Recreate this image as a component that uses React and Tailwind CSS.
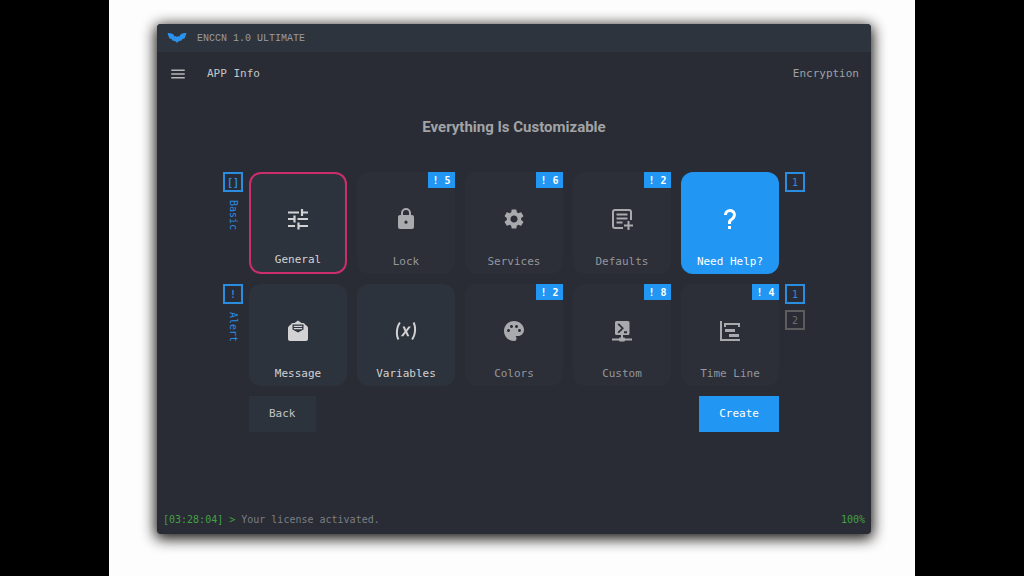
/* src/App.jsx */
import React, { useState } from "react";
import { MdMenu, MdPalette, MdSettings } from "react-icons/md";

const Svg = ({ children, className, ...rest }) => (
  <svg viewBox="0 0 24 24" fill="currentColor" className={className} aria-hidden="true" {...rest}>
    {children}
  </svg>
);

const TuneIcon = (props) => (
  <Svg {...props}>
    <path
      d="M2 5.500h11M16 2v7M16 5.500h6M2 12h6M8.500 8.500v7M11.500 12H22M2 19h7M12.500 15.500v7M12.500 19H22"
      fill="none"
      stroke="currentColor"
      strokeWidth="2.2"
    />
  </Svg>
);

const LockIcon = (props) => (
  <Svg {...props}>
    <path d="M12,16.800A1.600,1.600 0 0,0 13.600,15.200A1.600,1.600 0 0,0 12,13.600A1.600,1.600 0 0,0 10.400,15.200A1.600,1.600 0 0,0 12,16.800M18,8A2,2 0 0,1 20,10V20A2,2 0 0,1 18,22H6A2,2 0 0,1 4,20V10C4,8.89 4.9,8 6,8H7V6A5,5 0 0,1 12,1A5,5 0 0,1 17,6V8H18M12,3A3,3 0 0,0 9,6V8H15V6A3,3 0 0,0 12,3Z" />
  </Svg>
);

const NoteAddIcon = (props) => (
  <Svg {...props}>
    <path
      d="M21 13V5a2 2 0 0 0-2-2H5a2 2 0 0 0-2 2v14a2 2 0 0 0 2 2h8M6.5 7.5h11M6.5 11.5h11M6.5 15.5h6M18.5 14v9M14 18.5h9"
      fill="none"
      stroke="currentColor"
      strokeWidth="2"
    />
  </Svg>
);

const HelpIcon = (props) => (
  <Svg {...props}>
    <path d="M10,19H13V22H10V19M12,2C17.35,2.22 19.68,7.62 16.5,11.67C15.67,12.67 14.33,13.33 13.67,14.17C13,15 13,16 13,17H10C10,15.33 10,13.92 10.67,12.92C11.33,11.92 12.67,11.33 13.5,10.67C15.92,8.43 15.32,5.26 12,5A3,3 0 0,0 9,8H6A6,6 0 0,1 12,2Z" />
  </Svg>
);

const MessageIcon = (props) => (
  <Svg {...props}>
    <path
      fillRule="evenodd"
      d="M12 1.500 15.500 4H17q1.5 0 1.8 1.3L21 7q1 .8 1 2v11a2 2 0 0 1-2 2H4a2 2 0 0 1-2-2V9q0-1.200 1-2l2.200-1.700Q5.500 4 7 4h1.500ZM6.500 5.500v5L12 13.500l5.500-3v-5Z"
    />
    <path d="M7.800 6.700h8.400v1.200H7.800ZM7.800 9.100h8.400v1.100H7.800Z" />
  </Svg>
);

const VariableIcon = (props) => (
  <Svg {...props}>
    <path d="M20.41,3C21.8,5.71 22.35,8.84 22,12C21.8,15.16 20.7,18.29 18.83,21L17.3,20C18.91,17.57 19.85,14.8 20,12C20.34,9.2 19.89,6.43 18.7,4L20.41,3M5.17,3L6.7,4C5.09,6.43 4.15,9.2 4,12C3.66,14.8 4.12,17.57 5.3,20L3.61,21C2.21,18.29 1.65,15.17 2,12C2.2,8.84 3.3,5.71 5.17,3M12.08,10.68L14.4,7.45H16.93L13.15,12.45L15.35,17.37H13.09L11.71,14L9.28,17.33H6.76L10.66,12.21L8.53,7.45H10.8L12.08,10.68Z" />
  </Svg>
);

const ConsoleNetworkIcon = (props) => (
  <Svg {...props}>
    <path
      fillRule="evenodd"
      d="M6.500 2h11.500a1.500 1.500 0 0 1 1.500 1.500v11a1.500 1.500 0 0 1-1.500 1.500H13v2.500h1q1 0 1 1h7v2h-7q0 1-1 1h-4q-1 0-1-1H2v-2h7q0-1 1-1h1V16H6.500A1.500 1.500 0 0 1 5 14.500v-11A1.500 1.500 0 0 1 6.500 2ZM7.500 5.500l4 3.800-4 3.700 1.400 1.300 5-5-5-5ZM14 12.300h3v2h-3Z"
    />
  </Svg>
);

const GanttIcon = (props) => (
  <Svg {...props}>
    <path d="M2,2H4V20H22V22H2V2M7,10H17V13H7V10M11,15H21V18H11V15M6,4H22V8H20V6H8V8H6V4Z" />
  </Svg>
);

const rows = [
  {
    mark: "[]",
    label: "Basic",
    pages: [1],
    items: [
      { name: "General", icon: TuneIcon, active: true },
      { name: "Lock", icon: LockIcon, count: 5 },
      { name: "Services", icon: MdSettings, count: 6 },
      { name: "Defaults", icon: NoteAddIcon, count: 2 },
      { name: "Need Help?", icon: HelpIcon, help: true },
    ],
  },
  {
    mark: "!",
    label: "Alert",
    pages: [1, 2],
    items: [
      { name: "Message", icon: MessageIcon, active: true },
      { name: "Variables", icon: VariableIcon, active: true },
      { name: "Colors", icon: MdPalette, count: 2 },
      { name: "Custom", icon: ConsoleNetworkIcon, count: 8 },
      { name: "Time Line", icon: GanttIcon, count: 4 },
    ],
  },
];

const tileStyle = (item) => {
  if (item.help) return "bg-[#2196f3] text-white";
  if (item.active) return "bg-[#2d333c] text-[#d2d2d4]";
  return "bg-[#2c2e38] text-[#a9aaad]";
};

const Tile = ({ item, selected, onSelect }) => {
  const Icon = item.icon;
  return (
    <button
      type="button"
      onClick={onSelect}
      className={`relative flex h-[102px] flex-col items-center justify-between rounded-xl pb-1
        ${tileStyle(item)}
        ${selected ? "border-2 border-[#cb2d6d] pt-[33px]" : "pt-[35px]"}`}
    >
      <Icon className="h-6 w-6" />
      <span className={`text-[11px] leading-4 ${item.help || item.active ? "" : "text-[#95969b]"}`}>
        {item.name}
      </span>
      {item.count && (
        <span className="absolute right-0 top-0 flex h-4 w-[27px] items-center justify-center bg-[#2196f3] text-[10px] font-bold text-white">
          ! {item.count}
        </span>
      )}
    </button>
  );
};

const Row = ({ row, selected, onSelect }) => {
  const [page, setPage] = useState(1);

  return (
    <div className="flex gap-1.5">
      <div className="flex w-5 flex-col items-center gap-2 text-[10px] text-[#2a8de0]">
        <span className="flex h-5 w-5 items-center justify-center border-2 border-current font-bold">
          {row.mark}
        </span>
        <span className="leading-5 [writing-mode:vertical-rl]">{row.label}</span>
      </div>

      <div className="grid flex-1 grid-cols-5 gap-2.5">
        {row.items.map((item) => (
          <Tile
            key={item.name}
            item={item}
            selected={selected === item.name}
            onSelect={() => onSelect(item.name)}
          />
        ))}
      </div>

      <div className="flex w-5 flex-col gap-1.5">
        {row.pages.map((n) => (
          <button
            key={n}
            type="button"
            onClick={() => setPage(n)}
            className={`flex h-5 w-5 items-center justify-center border-2 text-[10px]
              ${page === n ? "border-[#2a8de0] text-[#2a8de0]" : "border-[#5c5c5e] text-[#6c6c6e]"}`}
          >
            {n}
          </button>
        ))}
      </div>
    </div>
  );
};

const App = () => {
  const [selected, setSelected] = useState("General");

  return (
    <div className="min-h-screen bg-black font-['DejaVu_Sans_Mono',monospace]">
      <div className="mx-auto flex min-h-screen w-full max-w-[806px] flex-col bg-[#fdfdfd] pb-[42px] pl-12 pr-11 pt-6">
        <div className="flex flex-1 flex-col overflow-hidden rounded-sm bg-[#292c34] shadow-[0_3px_14px_2px_rgba(15,12,8,0.95)]">
          {/* Title bar */}
          <header className="flex h-7 items-center gap-2.5 bg-[#2e343e] px-2.5">
            <svg viewBox="0 0 20 12" className="h-3 w-5 text-[#2b92ec]" fill="currentColor" aria-hidden="true">
              <path d="M.5 1C4 .800 6.600 1.600 7.600 4.400L8.800 4.100 10 5l1.200-.9 1.200.3C13.400 1.600 16 .800 19.500 1c-.6 1.800-1 3.600-2 5.400C15.500 6.600 14.800 7.400 14.200 8.800 12.600 8.600 11 9.400 10 11 9 9.400 7.400 8.600 5.800 8.800 5.200 7.400 4.500 6.600 2.500 6.400 1.500 4.600 1.100 2.800.5 1Z" />
            </svg>
            <span className="font-['Liberation_Mono',monospace] text-[10px] text-[#989ba1]">ENCCN 1.0 ULTIMATE</span>
          </header>

          {/* Menu */}
          <nav className="flex h-11 items-center px-3 text-[11px]">
            <button type="button" aria-label="Menu" className="text-[#b4b5b8]">
              <MdMenu className="h-[18px] w-[18px]" />
            </button>
            <a href="#info" className="ml-5 text-[#c6c7ca]">APP Info</a>
            <a href="#encryption" className="ml-auto text-[#9fa0a4]">Encryption</a>
          </nav>

          {/* Content */}
          <main className="flex flex-1 flex-col items-center pt-[19px]">
            <h1 className="font-['Roboto',sans-serif] text-[15px] font-bold leading-6 text-[#a2a3a7]">
              Everything Is Customizable
            </h1>

            <div className="mt-[33px] flex w-full max-w-[582px] flex-col gap-2.5">
              {rows.map((row) => (
                <Row key={row.label} row={row} selected={selected} onSelect={setSelected} />
              ))}
              <div className="flex justify-between px-[26px] text-[11px]">
                <button type="button" className="h-9 bg-[#2d333c] px-5 text-[#c2c3c6]">Back</button>
                <button type="button" className="h-9 bg-[#2196f3] px-5 text-white">Create</button>
              </div>
            </div>
          </main>

          {/* Status */}
          <footer className="flex h-[29px] items-center px-1.5 text-[10px]">
            <span className="text-[#43a047]">[03:28:04] &gt;</span>
            <span className="ml-1.5 text-[#7c7e84]">Your license activated.</span>
            <span className="ml-auto text-[#43a047]">100%</span>
          </footer>
        </div>
      </div>
    </div>
  );
};

export default App;
